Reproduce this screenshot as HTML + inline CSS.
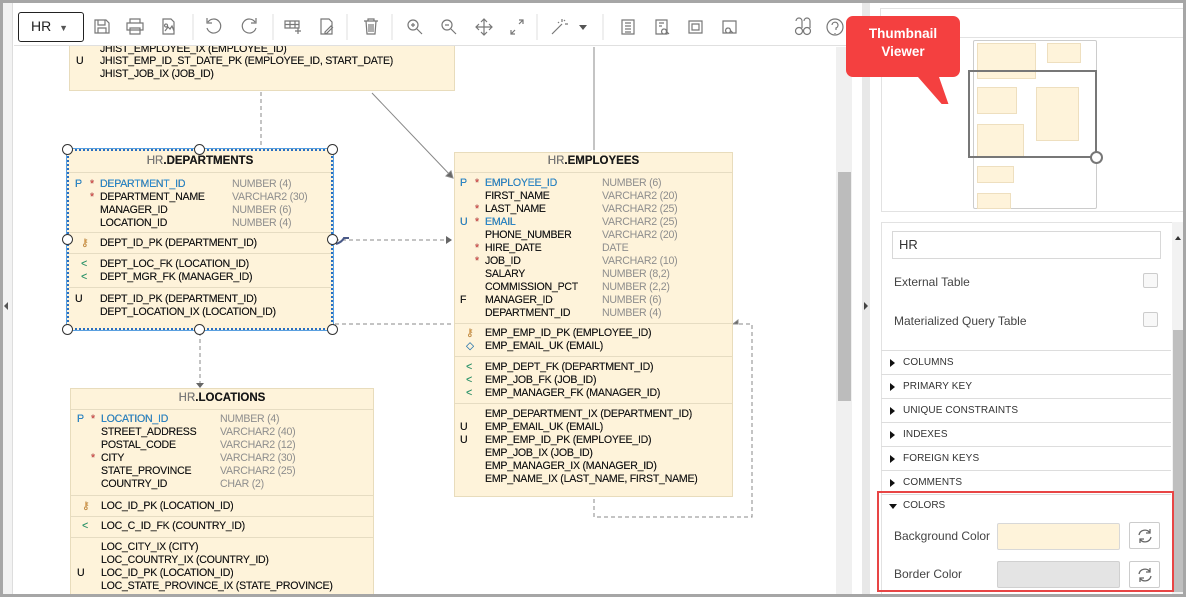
<!DOCTYPE html>
<html><head><meta charset="utf-8"><style>
*{box-sizing:border-box;margin:0;padding:0}
body{width:1186px;height:597px;overflow:hidden;background:#a6a6a6;font-family:"Liberation Sans",sans-serif;position:relative}
.abs{position:absolute}
.tb{position:absolute;background:#fef3da;border:1px solid #e8dcbc;font-size:10.6px;color:#1a1a1a;letter-spacing:-0.25px;text-shadow:0 0 0.3px #000}
.tb .h{position:absolute;left:0;right:0;text-align:center;font-weight:bold;font-size:11.5px;letter-spacing:0}
.tb .h span{color:#7a7a7a;font-weight:normal}
.tb .r{position:absolute;left:0;right:0;height:13px;line-height:13px;white-space:nowrap}
.tb .r span{position:absolute}
.tb .ln{position:absolute;left:0;right:0;height:1px;background:#e6dcc2}
.b{color:#2b8fd6}.g{color:#8d8d8d;text-shadow:none}.s{color:#e04848}.k{color:#e3a14a}.f{color:#2aa876}
.hd{position:absolute;width:11px;height:11px;border-radius:50%;background:#fff;border:1.3px solid #333}
.sec{position:absolute;left:881px;width:290px;height:24px;border-bottom:1px solid #ddd;font-size:10px;color:#333;line-height:24px;padding-left:22px;letter-spacing:.1px}
.sec:before{content:"";position:absolute;left:9px;top:8px;border-left:5px solid #111;border-top:4px solid transparent;border-bottom:4px solid transparent}
</style></head><body>
<div class="abs" style="left:3px;top:3px;width:1180px;height:591px;background:#fff"></div>
<div class="abs" style="left:3px;top:3px;width:10px;height:591px;background:#f2f2f2;border-right:1px solid #ddd"></div>
<div class="abs" style="left:4px;top:302px;border-right:4px solid #555;border-top:4px solid transparent;border-bottom:4px solid transparent"></div>
<div class="abs" style="left:836px;top:47px;width:16px;height:547px;background:#f0f0f0"></div>
<div class="abs" style="left:838px;top:172px;width:13px;height:229px;background:#bcbcbc"></div>
<div class="abs" style="left:862px;top:3px;width:8px;height:591px;background:#e8e8e8"></div>
<div class="abs" style="left:864px;top:302px;border-left:4px solid #444;border-top:4px solid transparent;border-bottom:4px solid transparent"></div>

<svg class="abs" style="left:0;top:0" width="860" height="597" fill="none" stroke="#888" stroke-width="1">
<path d="M261 92v55" stroke-dasharray="4 3"/>
<path d="M372 93l80 84"/><path d="M446 176l7 2-2-7z" fill="#666"/>
<path d="M594 47v103"/>
<path d="M335 240h115" stroke-dasharray="4 3"/><path d="M446 236l6 4-6 4z" fill="#666" stroke="none"/>
<path d="M335 324h117" stroke-dasharray="4 3"/>
<path d="M200 332v52" stroke-dasharray="4 3"/><path d="M196 383h8l-4 5z" fill="#666" stroke="none"/>
<path d="M594 499v18h158v-193h-15" stroke-dasharray="4 3"/><path d="M738 324l-5 0 5-4z" fill="#666"/>
<path d="M336 244q6-2 8-6l5 0" stroke="#4a5a88" stroke-width="2"/>
</svg>

<div class="tb" style="left:69px;top:30px;width:386px;height:61px">
<div class="r" style="top:12px"><span style="left:30px">JHIST_EMPLOYEE_IX (EMPLOYEE_ID)</span></div>
<div class="r" style="top:24px"><span style="left:6px">U</span><span style="left:30px">JHIST_EMP_ID_ST_DATE_PK (EMPLOYEE_ID, START_DATE)</span></div>
<div class="r" style="top:37px"><span style="left:30px">JHIST_JOB_IX (JOB_ID)</span></div>
</div>

<div class="tb" style="left:67px;top:149px;width:266px;height:181px;border:2px dotted #2a6fc0;box-shadow:0 0 0 1px #5aa0e0">
<div class="h" style="top:4px"><span>HR</span>.DEPARTMENTS</div>
<div class="ln" style="top:21px"></div>
<div class="r" style="top:27px"><span class="b" style="left:6px">P</span><span class="s" style="left:21px">*</span><span class="b" style="left:31px">DEPARTMENT_ID</span><span class="g" style="left:163px">NUMBER (4)</span></div>
<div class="r" style="top:40px"><span class="s" style="left:21px">*</span><span style="left:31px">DEPARTMENT_NAME</span><span class="g" style="left:163px">VARCHAR2 (30)</span></div>
<div class="r" style="top:53px"><span style="left:31px">MANAGER_ID</span><span class="g" style="left:163px">NUMBER (6)</span></div>
<div class="r" style="top:66px"><span style="left:31px">LOCATION_ID</span><span class="g" style="left:163px">NUMBER (4)</span></div>
<div class="ln" style="top:81px"></div>
<div class="r" style="top:86px"><span class="k" style="left:12px">⚷</span><span style="left:31px">DEPT_ID_PK (DEPARTMENT_ID)</span></div>
<div class="ln" style="top:102px"></div>
<div class="r" style="top:107px"><span class="f" style="left:12px">&lt;</span><span style="left:31px">DEPT_LOC_FK (LOCATION_ID)</span></div>
<div class="r" style="top:120px"><span class="f" style="left:12px">&lt;</span><span style="left:31px">DEPT_MGR_FK (MANAGER_ID)</span></div>
<div class="ln" style="top:136px"></div>
<div class="r" style="top:142px"><span style="left:6px">U</span><span style="left:31px">DEPT_ID_PK (DEPARTMENT_ID)</span></div>
<div class="r" style="top:155px"><span style="left:31px">DEPT_LOCATION_IX (LOCATION_ID)</span></div>
</div>
<div class="hd" style="left:62px;top:144px"></div><div class="hd" style="left:194px;top:144px"></div><div class="hd" style="left:327px;top:144px"></div>
<div class="hd" style="left:62px;top:234px"></div><div class="hd" style="left:327px;top:234px"></div>
<div class="hd" style="left:62px;top:324px"></div><div class="hd" style="left:194px;top:324px"></div><div class="hd" style="left:327px;top:324px"></div>

<div class="tb" style="left:454px;top:152px;width:279px;height:345px">
<div class="h" style="top:2px"><span>HR</span>.EMPLOYEES</div>
<div class="ln" style="top:19px"></div>
<div class="r" style="top:24px"><span class="b" style="left:5px">P</span><span class="s" style="left:20px">*</span><span class="b" style="left:30px">EMPLOYEE_ID</span><span class="g" style="left:147px">NUMBER (6)</span></div>
<div class="r" style="top:37px"><span style="left:30px">FIRST_NAME</span><span class="g" style="left:147px">VARCHAR2 (20)</span></div>
<div class="r" style="top:50px"><span class="s" style="left:20px">*</span><span style="left:30px">LAST_NAME</span><span class="g" style="left:147px">VARCHAR2 (25)</span></div>
<div class="r" style="top:63px"><span class="b" style="left:5px">U</span><span class="s" style="left:20px">*</span><span class="b" style="left:30px">EMAIL</span><span class="g" style="left:147px">VARCHAR2 (25)</span></div>
<div class="r" style="top:76px"><span style="left:30px">PHONE_NUMBER</span><span class="g" style="left:147px">VARCHAR2 (20)</span></div>
<div class="r" style="top:89px"><span class="s" style="left:20px">*</span><span style="left:30px">HIRE_DATE</span><span class="g" style="left:147px">DATE</span></div>
<div class="r" style="top:102px"><span class="s" style="left:20px">*</span><span style="left:30px">JOB_ID</span><span class="g" style="left:147px">VARCHAR2 (10)</span></div>
<div class="r" style="top:115px"><span style="left:30px">SALARY</span><span class="g" style="left:147px">NUMBER (8,2)</span></div>
<div class="r" style="top:128px"><span style="left:30px">COMMISSION_PCT</span><span class="g" style="left:147px">NUMBER (2,2)</span></div>
<div class="r" style="top:141px"><span style="left:5px">F</span><span style="left:30px">MANAGER_ID</span><span class="g" style="left:147px">NUMBER (6)</span></div>
<div class="r" style="top:154px"><span style="left:30px">DEPARTMENT_ID</span><span class="g" style="left:147px">NUMBER (4)</span></div>
<div class="ln" style="top:170px"></div>
<div class="r" style="top:174px"><span class="k" style="left:11px">⚷</span><span style="left:30px">EMP_EMP_ID_PK (EMPLOYEE_ID)</span></div>
<div class="r" style="top:187px"><span class="b" style="left:11px">◇</span><span style="left:30px">EMP_EMAIL_UK (EMAIL)</span></div>
<div class="ln" style="top:203px"></div>
<div class="r" style="top:208px"><span class="f" style="left:11px">&lt;</span><span style="left:30px">EMP_DEPT_FK (DEPARTMENT_ID)</span></div>
<div class="r" style="top:221px"><span class="f" style="left:11px">&lt;</span><span style="left:30px">EMP_JOB_FK (JOB_ID)</span></div>
<div class="r" style="top:234px"><span class="f" style="left:11px">&lt;</span><span style="left:30px">EMP_MANAGER_FK (MANAGER_ID)</span></div>
<div class="ln" style="top:250px"></div>
<div class="r" style="top:255px"><span style="left:30px">EMP_DEPARTMENT_IX (DEPARTMENT_ID)</span></div>
<div class="r" style="top:268px"><span style="left:5px">U</span><span style="left:30px">EMP_EMAIL_UK (EMAIL)</span></div>
<div class="r" style="top:281px"><span style="left:5px">U</span><span style="left:30px">EMP_EMP_ID_PK (EMPLOYEE_ID)</span></div>
<div class="r" style="top:294px"><span style="left:30px">EMP_JOB_IX (JOB_ID)</span></div>
<div class="r" style="top:307px"><span style="left:30px">EMP_MANAGER_IX (MANAGER_ID)</span></div>
<div class="r" style="top:320px"><span style="left:30px">EMP_NAME_IX (LAST_NAME, FIRST_NAME)</span></div>
</div>

<div class="tb" style="left:70px;top:388px;width:304px;height:206px;border-bottom:none">
<div class="h" style="top:3px"><span>HR</span>.LOCATIONS</div>
<div class="ln" style="top:20px"></div>
<div class="r" style="top:24px"><span class="b" style="left:6px">P</span><span class="s" style="left:20px">*</span><span class="b" style="left:30px">LOCATION_ID</span><span class="g" style="left:149px">NUMBER (4)</span></div>
<div class="r" style="top:37px"><span style="left:30px">STREET_ADDRESS</span><span class="g" style="left:149px">VARCHAR2 (40)</span></div>
<div class="r" style="top:50px"><span style="left:30px">POSTAL_CODE</span><span class="g" style="left:149px">VARCHAR2 (12)</span></div>
<div class="r" style="top:63px"><span class="s" style="left:20px">*</span><span style="left:30px">CITY</span><span class="g" style="left:149px">VARCHAR2 (30)</span></div>
<div class="r" style="top:76px"><span style="left:30px">STATE_PROVINCE</span><span class="g" style="left:149px">VARCHAR2 (25)</span></div>
<div class="r" style="top:89px"><span style="left:30px">COUNTRY_ID</span><span class="g" style="left:149px">CHAR (2)</span></div>
<div class="ln" style="top:106px"></div>
<div class="r" style="top:111px"><span class="k" style="left:11px">⚷</span><span style="left:30px">LOC_ID_PK (LOCATION_ID)</span></div>
<div class="ln" style="top:127px"></div>
<div class="r" style="top:131px"><span class="f" style="left:11px">&lt;</span><span style="left:30px">LOC_C_ID_FK (COUNTRY_ID)</span></div>
<div class="ln" style="top:148px"></div>
<div class="r" style="top:152px"><span style="left:30px">LOC_CITY_IX (CITY)</span></div>
<div class="r" style="top:165px"><span style="left:30px">LOC_COUNTRY_IX (COUNTRY_ID)</span></div>
<div class="r" style="top:178px"><span style="left:6px">U</span><span style="left:30px">LOC_ID_PK (LOCATION_ID)</span></div>
<div class="r" style="top:191px"><span style="left:30px">LOC_STATE_PROVINCE_IX (STATE_PROVINCE)</span></div>
</div>

<!-- toolbar (on top of canvas) -->
<div class="abs" style="left:14px;top:3px;width:848px;height:43px;background:#fff;border-bottom:1px solid #e0e0e0"></div>
<div class="abs" style="left:18px;top:12px;width:66px;height:30px;border:1.5px solid #222;border-radius:3px;background:#fff;font-size:14px;line-height:27px;padding-left:12px;color:#222">HR <span style="font-size:9px;color:#555;margin-left:4px">▼</span></div>
<svg class="abs" style="left:88px;top:12px" width="760" height="32" viewBox="88 12 760 32" fill="none" stroke="#777" stroke-width="1.2">
<path d="M95 20h11l3 3v10h-14z M98 20v5h7v-5 M98 33v-5h8v5"/>
<path d="M130 23v-4h10v4 M127 23h16v7h-16z M130 28h10v6h-10z"/>
<path d="M163 19h8l3 3v12h-11z M165 31l3-4 2 2 2-3 2 5 M166 24a1.5 1.5 0 1 0 .1 0"/>
<line x1="193" y1="14" x2="193" y2="40" stroke="#e4e4e4"/>
<path d="M208 22a7 7 0 1 1 -1 6 M207 18v5h5"/>
<path d="M255 22a7 7 0 1 0 1 6 M256 18v5h-5"/>
<line x1="273" y1="14" x2="273" y2="40" stroke="#e4e4e4"/>
<path d="M285 21h14v7h-14z M285 24.5h14 M290 21v7 M295 21v7 M298 28v6 M295 31h6"/>
<path d="M321 19h8l3 3v12h-11z M325 32l6-6 1.5 1.5-6 6h-1.5z"/>
<line x1="347" y1="14" x2="347" y2="40" stroke="#e4e4e4"/>
<path d="M364 21h14 M368 21v-2h6v2 M366 21l1 13h8l1-13 M369 24v8 M371 24v8 M373 24v8"/>
<line x1="392" y1="14" x2="392" y2="40" stroke="#e4e4e4"/>
<circle cx="413" cy="25" r="5"/><path d="M417 29l5 5 M411 25h4 M413 23v4"/>
<circle cx="447" cy="25" r="5"/><path d="M451 29l5 5 M445 25h4"/>
<path d="M484 19v16 M476 27h16 M481 22l3-3 3 3 M481 32l3 3 3-3 M479 24l-3 3 3 3 M489 24l3 3-3 3"/>
<path d="M511 34l4-4 M511 30v4h4 M523 20l-4 4 M523 24v-4h-4"/>
<line x1="537" y1="14" x2="537" y2="40" stroke="#e4e4e4"/>
<path d="M552 34l10-10 M562 19v3 M565 24h3 M558 22l1 1 M565 20l-1 1"/>
<path d="M579 25h8l-4 5z" fill="#555" stroke="none"/>
<line x1="603" y1="14" x2="603" y2="40" stroke="#e4e4e4"/>
<path d="M622 20h12v14h-12z M625 23h6 M625 26h6 M625 29h6 M625 32h6"/>
<path d="M656 20h11v14h-11z M659 23h5 M659 26h3 M664 29a2.5 2.5 0 1 0 .1 0 M666 31l3 3"/>
<path d="M689 21h13v12h-13z M692 24h7v6h-7z"/>
<path d="M723 21h13v12h-13z M728 28a2.5 2.5 0 1 0 .1 0 M730 30l3 3"/>
<path d="M796 21a3 3 0 0 1 6 0v7 M804 21a3 3 0 0 1 6 0v7"/><circle cx="799" cy="31" r="3.5"/><circle cx="807" cy="31" r="3.5"/>
<circle cx="835" cy="27" r="8"/><path d="M832 25a3 3 0 1 1 4 3v2 M835 33v1"/>
</svg>

<!-- right panel -->
<div class="abs" style="left:880px;top:8px;width:303px;height:30px;border:1px solid #e2e2e2;border-right:none;background:#fff"></div>
<div class="abs" style="left:881px;top:38px;width:302px;height:174px;border-left:1px solid #e2e2e2;border-bottom:1px solid #e2e2e2"></div>
<div class="abs" style="left:973px;top:40px;width:124px;height:169px;border:1px solid #ccc;border-radius:2px;background:#fff"></div>
<div class="abs" style="left:977px;top:43px;width:59px;height:36px;background:#fef3da;border:1px solid #eedfbf"></div>
<div class="abs" style="left:1047px;top:43px;width:34px;height:20px;background:#fef3da;border:1px solid #eedfbf"></div>
<div class="abs" style="left:977px;top:87px;width:40px;height:27px;background:#fef3da;border:1px solid #eedfbf"></div>
<div class="abs" style="left:1036px;top:87px;width:43px;height:54px;background:#fef3da;border:1px solid #eedfbf"></div>
<div class="abs" style="left:977px;top:124px;width:47px;height:33px;background:#fef3da;border:1px solid #eedfbf"></div>
<div class="abs" style="left:977px;top:166px;width:37px;height:17px;background:#fef3da;border:1px solid #eedfbf"></div>
<div class="abs" style="left:977px;top:193px;width:34px;height:16px;background:#fef3da;border:1px solid #eedfbf"></div>
<div class="abs" style="left:968px;top:70px;width:129px;height:88px;border:2px solid #777"></div>
<div class="hd" style="left:1090px;top:151px;width:13px;height:13px;border:2px solid #777"></div>
<svg class="abs" style="left:846px;top:14px" width="120" height="90"><path d="M8 2h100a7 7 0 0 1 7 7v47a7 7 0 0 1-7 7h-14l14 40-35-40h-65a7 7 0 0 1-7-7v-47a7 7 0 0 1 7-7z" fill="#f44040" transform="translate(-1 0)"/></svg>
<div class="abs" style="left:846px;top:25px;width:114px;text-align:center;color:#fff;font-weight:bold;font-size:13.5px;line-height:18px">Thumbnail<br>Viewer</div>
<div class="abs" style="left:881px;top:222px;width:291px;height:372px;border-left:1px solid #e2e2e2;border-top:1px solid #e2e2e2"></div>
<div class="abs" style="left:1172px;top:222px;width:11px;height:372px;background:#f2f2f2"></div>
<div class="abs" style="left:1173px;top:330px;width:10px;height:262px;background:#bfbfbf"></div>
<div class="abs" style="left:1175px;top:236px;border-bottom:4px solid #333;border-left:3px solid transparent;border-right:3px solid transparent"></div>
<div class="abs" style="left:892px;top:231px;width:269px;height:28px;border:1px solid #d8d8d8;font-size:13px;line-height:26px;padding-left:6px;color:#333">HR</div>
<div class="abs" style="left:894px;top:275px;font-size:12px;color:#444">External Table</div>
<div class="abs" style="left:1143px;top:273px;width:15px;height:15px;border:1px solid #ccc;border-radius:2px;background:#f8f8f8"></div>
<div class="abs" style="left:894px;top:314px;font-size:12px;color:#444">Materialized Query Table</div>
<div class="abs" style="left:1143px;top:312px;width:15px;height:15px;border:1px solid #ccc;border-radius:2px;background:#f8f8f8"></div>
<div class="abs" style="left:881px;top:350px;width:290px;height:1px;background:#ddd"></div>
<div class="sec" style="top:351px">COLUMNS</div>
<div class="sec" style="top:375px">PRIMARY KEY</div>
<div class="sec" style="top:399px">UNIQUE CONSTRAINTS</div>
<div class="sec" style="top:423px">INDEXES</div>
<div class="sec" style="top:447px">FOREIGN KEYS</div>
<div class="sec" style="top:471px">COMMENTS</div>
<div class="abs" style="left:877px;top:491px;width:297px;height:101px;border:2px solid #e84545"></div>
<div class="abs" style="left:889px;top:504px;border-top:5px solid #111;border-left:4px solid transparent;border-right:4px solid transparent"></div>
<div class="abs" style="left:903px;top:500px;font-size:10px;color:#333">COLORS</div>
<div class="abs" style="left:894px;top:529px;font-size:12px;color:#444">Background Color</div>
<div class="abs" style="left:997px;top:523px;width:123px;height:27px;background:#fef3da;border:1px solid #d8d8d8;border-radius:2px"></div>
<div class="abs" style="left:894px;top:567px;font-size:12px;color:#444">Border Color</div>
<div class="abs" style="left:997px;top:561px;width:123px;height:27px;background:#e4e4e4;border:1px solid #d0d0d0;border-radius:2px"></div>
<div class="abs" style="left:1129px;top:522px;width:31px;height:27px;border:1px solid #ccc;border-radius:2px;background:#fff"></div>
<div class="abs" style="left:1129px;top:561px;width:31px;height:27px;border:1px solid #ccc;border-radius:2px;background:#fff"></div>
<svg class="abs" style="left:1136px;top:527px" width="18" height="18" fill="none" stroke="#666" stroke-width="1.3"><path d="M3 8a6 6 0 0 1 11-2M15 10a6 6 0 0 1-11 2M14 2v4h-4M4 16v-4h4"/></svg>
<svg class="abs" style="left:1136px;top:566px" width="18" height="18" fill="none" stroke="#666" stroke-width="1.3"><path d="M3 8a6 6 0 0 1 11-2M15 10a6 6 0 0 1-11 2M14 2v4h-4M4 16v-4h4"/></svg>
</body></html>
